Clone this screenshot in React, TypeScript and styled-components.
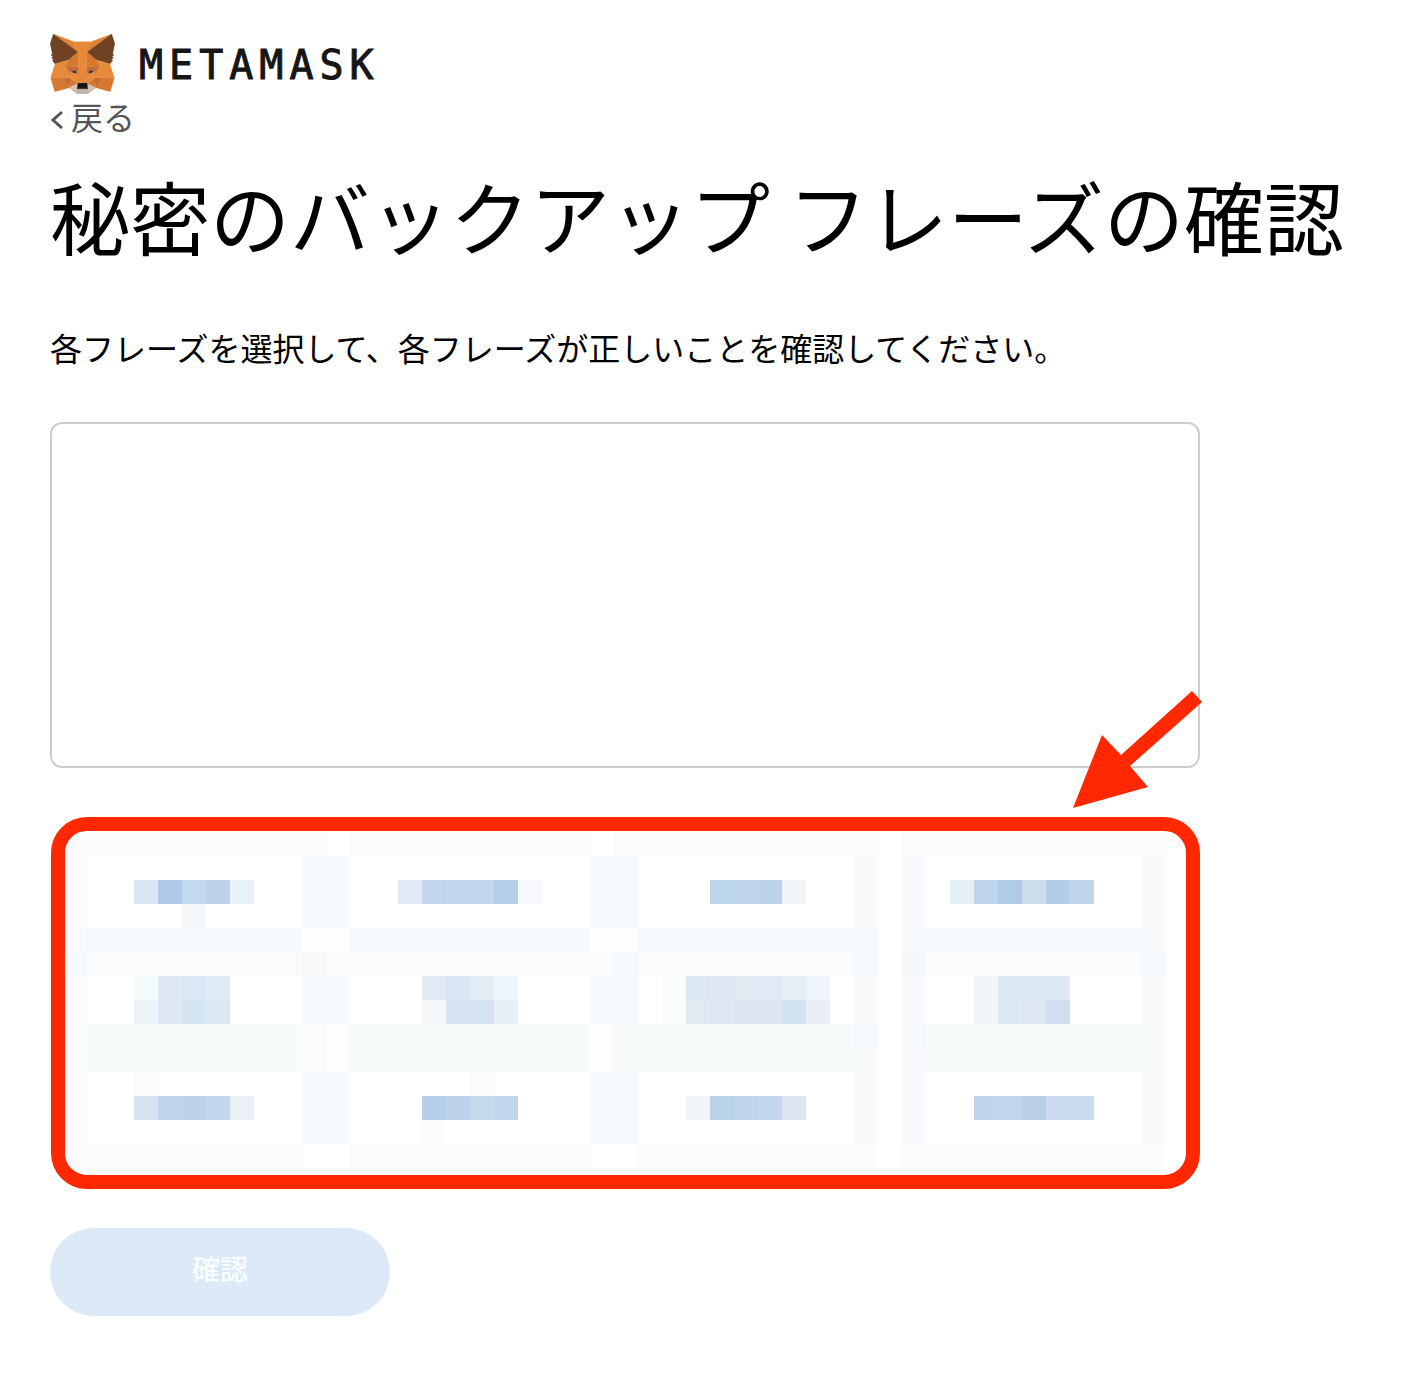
import React from 'react';
import styled, { createGlobalStyle } from 'styled-components';

const CELL = 24;
const RED = '#ff2800';

const GlobalStyle = createGlobalStyle`
  *, *::before, *::after { box-sizing: border-box; }
  body {
    margin: 0;
    background: #fff;
    color: #000;
    font-family: "Noto Sans CJK JP", "Noto Sans", sans-serif;
  }
`;

const Page = styled.main`
  padding: 34px 50px 58px;
`;

const Brand = styled.header`
  display: flex;
  align-items: center;
  gap: 24px;
  height: 60px;
`;

const FoxLogo = styled.svg`
  width: 65px;
  height: 60px;
`;

const Wordmark = styled.span`
  padding-top: 2px;
  font-family: "DejaVu Sans Mono", monospace;
  font-size: 40px;
  line-height: 60px;
  letter-spacing: 6px;
  color: #161616;
  -webkit-text-stroke: 1px #161616;
`;

const BackLink = styled.a`
  display: flex;
  align-items: center;
  gap: 8px;
  width: fit-content;
  font-size: 32px;
  line-height: 44px;
  color: #555;
  text-decoration: none;
`;

const Chevron = styled.svg`
  width: 13px;
  height: 26px;
`;

const Title = styled.h1`
  margin: 16px 0 0;
  font-size: 80px;
  font-weight: 400;
  line-height: 120px;
  white-space: nowrap;
`;

const Lead = styled.p`
  margin: 49px 0 0;
  font-size: 32px;
  line-height: 48px;
`;

const Form = styled.form`
  position: relative;
  max-width: 1150px;
  margin-top: 51px;
`;

const Answer = styled.textarea`
  display: block;
  width: 100%;
  height: 346px;
  padding: 24px;
  border: 2px solid #cdcdcd;
  border-radius: 12px;
  background: #fff;
  font: inherit;
  font-size: 32px;
  resize: none;
  outline: none;
`;

const Arrow = styled.svg`
  position: absolute;
  top: 268px;
  right: -2px;
  width: 130px;
  height: 120px;
`;

const Board = styled.div`
  position: relative;
  margin: 49px 0 0 1px;
  padding: 25px 21px;
  height: 372px;
  border: 14px solid ${RED};
  border-radius: 36px;
  overflow: hidden;
`;

const Backdrop = styled.svg`
  position: absolute;
  top: 1px;
  left: -3px;
  width: 1128px;
  height: 336px;
`;

const Phrases = styled.div`
  position: relative;
  display: grid;
  grid-template-columns: 216px 240px 216px 240px;
  grid-template-rows: 72px 48px 72px;
  gap: 48px;
`;

const Phrase = styled.button`
  display: block;
  padding: 0;
  border: 0;
  background: #fff;
  cursor: pointer;

  &:nth-child(4n) {
    margin-left: 24px;
  }
`;

const Mosaic = styled.svg`
  display: block;
  width: 100%;
  height: 100%;
`;

const Confirm = styled.button`
  display: block;
  width: 340px;
  height: 88px;
  margin-top: 39px;
  padding: 0 0 8px;
  border: 0;
  border-radius: 44px;
  background: #dceaf8;
  color: #fafdff;
  font-family: inherit;
  font-size: 28px;
  font-weight: 500;
  line-height: 80px;
`;

/* A run of mosaic cells: column, row, then one colour per cell. */
type Run = [number, number, string[]];
type PhraseData = { columns: number; rows: number; runs: Run[] };

const phrases: PhraseData[] = [
  { columns: 9, rows: 3, runs: [[2, 1, ['#d8e5f3', '#afcae6', '#c3d9ed', '#bbd2ea', '#e8f0f9']], [4, 2, ['#f3f7fa']]] },
  { columns: 10, rows: 3, runs: [[2, 1, ['#dfeaf5', '#c1d6ec', '#c2d8ed', '#c2d8ed', '#b6cee7', '#f7f9fd']]] },
  { columns: 9, rows: 3, runs: [[3, 1, ['#bdd5eb', '#bfd4eb', '#bcd3ec', '#f0f3f8']]] },
  { columns: 9, rows: 3, runs: [[1, 1, ['#e7f0f7', '#c0d5eb', '#b1cbe5', '#cbdcec', '#b4cde7', '#bfd6ea']]] },
  { columns: 9, rows: 2, runs: [[2, 0, ['#f4f9fc', '#dfe9f4', '#dae7f4', '#e0ecf5']], [2, 1, ['#eef3f7', '#dde8f2', '#d6e5f2', '#dbe8f2']]] },
  { columns: 10, rows: 2, runs: [[3, 0, ['#dfeaf4', '#d9e6f4', '#e2edf6', '#eff6fb']], [3, 1, ['#f3f7fa', '#d4e3ef', '#d4e3ef', '#e7eef7']]] },
  { columns: 9, rows: 2, runs: [[1, 0, ['#fafdfd', '#dbe7f3', '#dfe9f3', '#e0eaf3', '#e0eaf5', '#e6eff8', '#f0f4fa']], [1, 1, ['#fafdfd', '#dfeaf3', '#dde8f2', '#dbe6f1', '#dbe6f1', '#d3e2f0', '#e8eff7']]] },
  { columns: 9, rows: 2, runs: [[2, 0, ['#f2f6fa', '#ddeaf4', '#ddeaf4', '#ddeaf4']], [2, 1, ['#f2f6f9', '#dde9f3', '#dce7f2', '#cfdfef']]] },
  { columns: 9, rows: 3, runs: [[2, 0, ['#fafbfd']], [2, 1, ['#d5e3f0', '#bed4e9', '#bcd3e9', '#c3d8ee', '#e9f1f7']]] },
  { columns: 10, rows: 3, runs: [[5, 0, ['#fafbfd']], [3, 1, ['#b6cee8', '#bbd2ea', '#c4d9ea', '#c2d7ec']], [3, 2, ['#fbfcfe']]] },
  { columns: 9, rows: 3, runs: [[2, 1, ['#f2f5f9', '#bbd3ea', '#c0d4eb', '#c2d7ed', '#dae5f1']]] },
  { columns: 9, rows: 3, runs: [[2, 1, ['#c0d5ea', '#c1d6ec', '#b8cfe7', '#cbdaef', '#c8dbef']]] },
];

/* Tinted blocks behind the phrases: column, row, columns, rows, colour. */
const tints: [number, number, number, number, string][] = [
  [0, 0, 11, 1, '#fafbfd'], [12, 0, 10, 1, '#fafbfd'], [23, 0, 11, 1, '#fafbfd'], [35, 0, 11, 1, '#fafbfd'],
  [0, 1, 1, 12, '#f9fbfd'],
  [10, 1, 2, 12, '#f7fbfe'], [22, 1, 2, 12, '#f7fafd'], [33, 1, 1, 12, '#f8fafc'], [35, 1, 1, 12, '#f9fafd'], [45, 1, 1, 12, '#f8fafc'],
  [1, 4, 9, 1, '#f7fafc'], [12, 4, 10, 1, '#f7fafc'], [24, 4, 10, 1, '#f7fafc'], [35, 4, 10, 1, '#f7fafc'],
  [10, 4, 2, 1, '#fdfdfe'], [22, 4, 2, 1, '#fdfdfe'],
  [1, 5, 9, 1, '#fafbfd'], [11, 5, 12, 1, '#fafbfd'], [24, 5, 9, 1, '#fafbfd'], [36, 5, 9, 1, '#fafbfd'],
  [0, 5, 1, 1, '#f6f9fc'], [10, 5, 1, 1, '#f7f9fa'], [23, 5, 1, 1, '#f6f9fb'], [33, 5, 1, 1, '#f5f9fb'], [35, 5, 1, 1, '#f5f8fb'], [45, 5, 1, 1, '#f6f9fb'],
  [1, 8, 9, 2, '#f7fbfc'], [12, 8, 10, 2, '#f7fbfc'], [23, 8, 10, 2, '#f7fbfc'], [36, 8, 9, 2, '#f7fbfc'],
  [10, 8, 1, 2, '#f9fbfc'], [11, 8, 1, 2, '#fdfdfd'], [22, 8, 1, 2, '#fdfdfd'], [33, 8, 1, 1, '#f6f9fb'], [35, 8, 1, 1, '#f6f9fb'],
  [0, 13, 10, 1, '#fafbfd'], [12, 13, 10, 1, '#fafbfd'], [24, 13, 10, 1, '#fbfcfd'], [35, 13, 11, 1, '#fbfcfc'],
];

function PhraseTile({ data, index }: { data: PhraseData; index: number }) {
  return (
    <Phrase type="button" aria-label={`フレーズ ${index + 1}`}>
      <Mosaic viewBox={`0 0 ${data.columns * CELL} ${data.rows * CELL}`} shapeRendering="crispEdges" aria-hidden="true">
        {data.runs.map(([column, row, colors]) =>
          colors.map((color, i) => (
            <rect key={`${row}-${i}`} x={(column + i) * CELL} y={row * CELL} width={CELL} height={CELL} fill={color} />
          )),
        )}
      </Mosaic>
    </Phrase>
  );
}

const foxFacets: [string, string[]][] = [
  ['#e08238', ['274.1 35.5 174.6 109.4 193 65.8', '44.4 35.5 143.1 110.1 125.6 65.8']],
  ['#d67830', ['238.3 206.8 211.8 247.4 268.5 263 284.8 207.7', '33.9 207.7 50.1 263 106.8 247.4 80.3 206.8', '103.6 138.2 87.8 162.1 144.1 164.6 142.1 104.1', '214.9 138.2 175.9 103.4 174.6 164.6 230.8 162.1', '106.8 247.4 140.6 230.9 111.4 208.1', '177.9 230.9 211.8 247.4 207.1 208.1']],
  ['#d5c2b4', ['211.8 247.4 177.9 230.9 180.6 253 180.3 262.3', '106.8 247.4 138.3 262.3 138.1 253 140.6 230.9']],
  ['#2c3440', ['138.8 193.5 110.6 185.2 130.5 176.1', '179.7 193.5 188 176.1 208 185.2']],
  ['#c46a32', ['106.8 247.4 111.6 206.8 80.3 207.7', '207 206.8 211.8 247.4 238.3 207.7', '230.8 162.1 174.6 164.6 179.8 193.5 188.1 176.1 208.1 185.2', '110.6 185.2 130.6 176.1 138.8 193.5 144.1 164.6 87.8 162.1']],
  ['#d9792f', ['87.8 162.1 111.4 208.1 110.6 185.2', '208.1 185.2 207.1 208.1 230.8 162.1', '144.1 164.6 138.8 193.5 145.4 227.6 146.9 182.7', '174.6 164.6 171.9 182.6 173.1 227.6 179.8 193.5']],
  ['#e68a3a', ['179.8 193.5 173.1 227.6 177.9 230.9 207.1 208.1 208.1 185.2', '110.6 185.2 111.4 208.1 140.6 230.9 145.4 227.6 138.8 193.5']],
  ['#c0b2a6', ['180.3 262.3 180.6 253 178.1 250.8 140.4 250.8 138.1 253 138.3 262.3 106.8 247.4 117.8 256.4 140.1 271.9 178.4 271.9 200.8 256.4 211.8 247.4']],
  ['#161616', ['177.9 230.9 173.1 227.6 145.4 227.6 140.6 230.9 138.1 253 140.4 250.8 178.1 250.8 180.6 253']],
  ['#704224', ['278.3 114.2 286.8 73.4 274.1 35.5 177.9 106.9 214.9 138.2 267.2 153.5 278.8 140 273.8 136.4 281.8 129.1 275.6 124.3 283.6 118.2', '31.8 73.4 40.3 114.2 34.9 118.2 42.9 124.3 36.8 129.1 44.8 136.4 39.8 140 51.3 153.5 103.6 138.2 140.6 106.9 44.4 35.5']],
  ['#e68a3a', ['267.2 153.5 214.9 138.2 230.8 162.1 207.1 208.1 238.3 207.7 284.8 207.7', '103.6 138.2 51.3 153.5 33.9 207.7 80.3 207.7 111.4 208.1 87.8 162.1', '174.6 164.6 177.9 106.9 193.1 65.8 125.6 65.8 140.6 106.9 144.1 164.6 145.3 182.8 145.4 227.6 173.1 227.6 173.3 182.8']],
];

export default function App() {
  return (
    <>
      <GlobalStyle />
      <Page lang="ja">
        <Brand>
          <FoxLogo viewBox="31.8 35.5 255 236.4" aria-hidden="true">
            {foxFacets.map(([color, shapes]) =>
              shapes.map((points) => <polygon key={points} points={points} fill={color} stroke={color} strokeWidth="1" strokeLinejoin="round" />),
            )}
          </FoxLogo>
          <Wordmark>METAMASK</Wordmark>
        </Brand>

        <BackLink href="#back">
          <Chevron viewBox="0 0 13 26" aria-hidden="true">
            <path d="M12 9 3 17 12 25" fill="none" stroke="#555" strokeWidth="3" />
          </Chevron>
          戻る
        </BackLink>

        <Title>秘密のバックアップ フレーズの確認</Title>
        <Lead>各フレーズを選択して、各フレーズが正しいことを確認してください。</Lead>

        <Form>
          <Answer aria-label="選択したフレーズ" readOnly />
          <Board>
            <Backdrop viewBox="0 0 1128 336" shapeRendering="crispEdges" aria-hidden="true">
              {tints.map(([column, row, columns, rows, color]) => (
                <rect key={`${column}-${row}-${rows}`} x={column * CELL} y={row * CELL} width={columns * CELL} height={rows * CELL} fill={color} />
              ))}
            </Backdrop>
            <Phrases>
              {phrases.map((data, index) => (
                <PhraseTile key={index} data={data} index={index} />
              ))}
            </Phrases>
          </Board>
          <Arrow viewBox="0 0 130 120" aria-hidden="true">
            <path d="M120 1 130 12 58 76 76 97 1 118 30 45 49 65Z" fill={RED} />
          </Arrow>
          <Confirm type="submit" disabled>確認</Confirm>
        </Form>
      </Page>
    </>
  );
}
